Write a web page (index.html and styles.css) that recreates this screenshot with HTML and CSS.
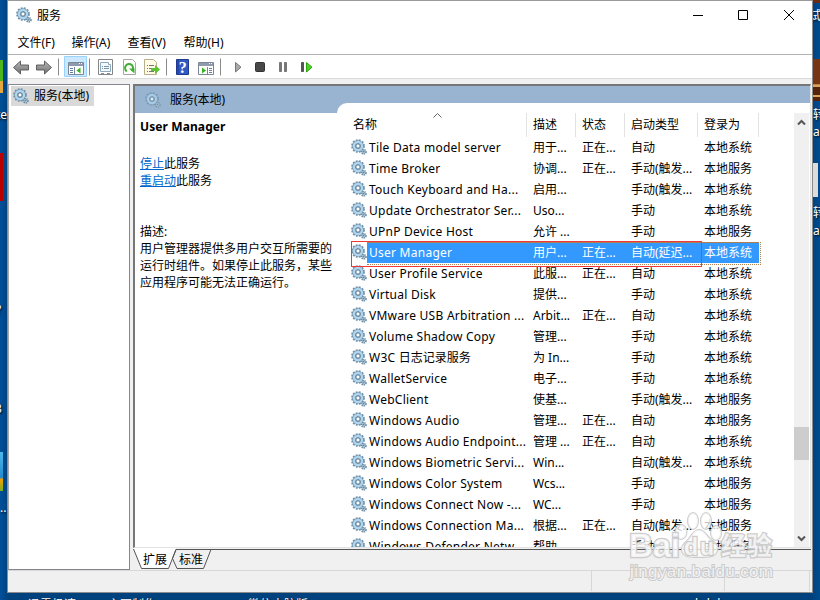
FILE: index.html
```
<!DOCTYPE html>
<html lang="zh-CN">
<head>
<meta charset="utf-8">
<title>服务</title>
<link rel="stylesheet" href="styles.css">
</head>
<body>
<svg class="defs" width="0" height="0">
  <defs>
    <symbol id="gear" viewBox="0 0 16 16">
      <circle cx="7" cy="7" r="5.9" fill="none" stroke="#6d8fa8" stroke-width="1.9" stroke-dasharray="1.9 1.2"/>
      <circle cx="7" cy="7" r="4" fill="none" stroke="#7499b5" stroke-width="3.6"/>
      <circle cx="7" cy="7" r="4" fill="none" stroke="#b0d5ec" stroke-width="2.3"/>
      <circle cx="7" cy="7" r="2.1" fill="#fff" stroke="#4d6d87" stroke-width=".9"/>
      <circle cx="12.800" cy="12.800" r="2.100" fill="#c4dcea" stroke="#6c8ca3" stroke-width="1.800" stroke-dasharray="1.2 .7"/>
      <circle cx="12.800" cy="12.800" r=".8" fill="#4f7490"/>
    </symbol>
    <linearGradient id="gray" x2="0" y2="1"><stop stop-color="#b8b8b8"/><stop offset="1" stop-color="#707070"/></linearGradient>
  </defs>
</svg>
<div class="desk">
  <span class="dk d1">te</span><span class="dk d2">?</span><span class="dk d3">3</span><span class="dk d4">...</span>
  <i class="blob b1"></i><i class="blob b2"></i><i class="blob b3"></i>
  <span class="dk d5">试.</span><span class="dk d6">转</span><span class="dk d7">a</span><span class="dk d8">转</span><span class="dk d9">a</span>
  <i class="blob b4"></i><i class="blob b5"></i><i class="blob b6"></i>
  <span class="dk d10">迅雷极速</span><span class="dk d11">主图制作</span><span class="dk d12">微信电脑版</span><span class="dk d13">bd d</span>
</div>
<div class="window">
  <header class="title">
    <svg class="ico"><use href="#gear"/></svg><span>服务</span>
    <svg class="ctl" width="110" height="20" fill="none" stroke="#000"><path d="M1 10.500h10M46.500 5.500h9v9h-9zM92 5l10 10M102 5L92 15"/></svg>
  </header>
  <nav class="menu"><span>文件(F)</span><span>操作(A)</span><span>查看(V)</span><span>帮助(H)</span></nav>
  <div class="tools">
    <svg width="320" height="23" viewBox="8 55 320 23">
      <g fill="url(#gray)" stroke="#555" stroke-width=".9">
        <path d="M13.500 67.500l7-6.500v4h8v5h-8v4z"/><path d="M51.500 67.500l-7-6.500v4h-8v5h8v4z"/>
      </g>
      <path d="M58.500 58.500v17M89.500 58.500v17M166.500 58.500v17M220.500 58.500v17" stroke="#8a8a8a"/>
      <path d="M64.500 56.500h22v20h-22z" fill="#cce8ff" stroke="#99d1ff"/>
      <path d="M68.500 62.500h15v12h-15z" fill="#fff" stroke="#7c8796"/><path d="M69 64.500h14" stroke="#8f9bac" stroke-width="3"/><path d="M79 63.500h1M81 63.500h1" stroke="#fff"/>
      <path d="M74.500 67v7" stroke="#7c8796"/><path d="M70 68.500h3M70 70.500h3M70 72.500h3" stroke="#5f7fa6"/><path d="M80.500 67.500v6l-4-3z" fill="#35b51d"/>
      <path d="M98.500 59.500h14v15h-14z" fill="#fff" stroke="#858585"/><path d="M100.500 62.500h8v2h2v7h-10z" fill="#f3f8fc" stroke="#8fa9bc"/><path d="M102 66.500h1M104 66.500h5M102 68.500h1M104 68.500h5M101 73.500h3M107 73.500h3" stroke="#7a95a8"/>
      <path d="M123.500 59.500h9l3 3v12h-12z" fill="#fffefa" stroke="#a6a6a6"/><path d="M126.800 71.300a4 4 0 1 1 5-.4" fill="none" stroke="#3fae35" stroke-width="2"/><path d="M129 68.500h5.500v5z" fill="#3fae35"/>
      <path d="M144.500 59.500h9l3 3v12h-12z" fill="#fffbe5" stroke="#b7ae8b"/><path d="M147 65.500h1M149 65.500h5M147 68.500h1M149 68.500h3M147 71.500h1M149 71.500h5" stroke="#777"/><path d="M151 68h4v-3l5 4.500-5 4.500v-3h-4z" fill="#5bc52f"/>
      <path d="M176.500 59.500h12v15h-12z" fill="#3059c4" stroke="#203a91"/><path d="M178 60v14" stroke="#1d388b"/>
      <text x="178.800" y="73" fill="#fff" font-family="Liberation Serif" font-weight="bold" font-size="16">?</text>
      <path d="M198.500 62.500h15v12h-15z" fill="#fff" stroke="#7c8796"/><path d="M199 64.500h14" stroke="#8f9bac" stroke-width="3"/><path d="M209 63.500h1M211 63.500h1" stroke="#fff"/><path d="M207.500 67v7" stroke="#7c8796"/><path d="M209 68.500h3M209 70.500h3M209 72.500h3" stroke="#5f7fa6"/><path d="M202 67.500v6l4-3z" fill="#35b51d"/>
      <path d="M235.500 62.500v9.500l5.500-4.800z" fill="#aaa" stroke="#777"/>
      <rect x="255.500" y="62.500" width="9" height="9" rx="1" fill="#484848" stroke="#333"/>
      <path d="M279.500 62.500h2v9h-2zM284.500 62.500h2v9h-2z" fill="#777" stroke="#777"/>
      <path d="M301.500 62.500h2v9h-2z" fill="#555" stroke="#555"/><path d="M306.500 62.500v9.500l5.500-4.800z" fill="#4ed323" stroke="#2ba60f"/>
    </svg>
  </div>
  <main class="body">
    <aside class="tree"><div class="node"><svg class="ico"><use href="#gear"/></svg><span>服务(本地)</span></div></aside>
    <section class="right">
      <div class="panel">
        <div class="banner"><svg class="ico"><use href="#gear"/></svg><span>服务(本地)</span></div>
        <div class="content">
          <div class="detail">
            <h1>User Manager</h1>
            <p class="links"><a>停止</a>此服务<br><a>重启动</a>此服务</p>
            <p class="desc">描述:<br>用户管理器提供多用户交互所需要的<br>运行时组件。如果停止此服务，某些<br>应用程序可能无法正确运行。</p>
          </div>
          <div class="list">
            <div class="head"><span>名称</span><span>描述</span><span>状态</span><span>启动类型</span><span>登录为</span>
              <svg class="sort" width="9" height="5" fill="none" stroke="#666"><path d="M.5 4.500l4-4 4 4"/></svg></div>
            <div class="rows">
              <div class="row"><svg class="ico"><use href="#gear"/></svg><b>Tile Data model server</b><span>用于...</span><span>正在...</span><span>自动</span><span>本地系统</span></div>
              <div class="row"><svg class="ico"><use href="#gear"/></svg><b>Time Broker</b><span>协调...</span><span>正在...</span><span>手动(触发...</span><span>本地服务</span></div>
              <div class="row"><svg class="ico"><use href="#gear"/></svg><b>Touch Keyboard and Ha...</b><span>启用...</span><span></span><span>手动(触发...</span><span>本地系统</span></div>
              <div class="row"><svg class="ico"><use href="#gear"/></svg><b>Update Orchestrator Ser...</b><span>Uso...</span><span></span><span>手动</span><span>本地系统</span></div>
              <div class="row"><svg class="ico"><use href="#gear"/></svg><b>UPnP Device Host</b><span>允许 ...</span><span></span><span>手动</span><span>本地服务</span></div>
              <div class="row sel"><svg class="ico"><use href="#gear"/></svg><b>User Manager</b><span>用户...</span><span>正在...</span><span>自动(延迟...</span><span>本地系统</span></div>
              <div class="row"><svg class="ico"><use href="#gear"/></svg><b>User Profile Service</b><span>此服...</span><span>正在...</span><span>自动</span><span>本地系统</span></div>
              <div class="row"><svg class="ico"><use href="#gear"/></svg><b>Virtual Disk</b><span>提供...</span><span></span><span>手动</span><span>本地系统</span></div>
              <div class="row"><svg class="ico"><use href="#gear"/></svg><b>VMware USB Arbitration ...</b><span>Arbit...</span><span>正在...</span><span>自动</span><span>本地系统</span></div>
              <div class="row"><svg class="ico"><use href="#gear"/></svg><b>Volume Shadow Copy</b><span>管理...</span><span></span><span>手动</span><span>本地系统</span></div>
              <div class="row"><svg class="ico"><use href="#gear"/></svg><b>W3C <i>日志记录服务</i></b><span>为 In...</span><span></span><span>手动</span><span>本地系统</span></div>
              <div class="row"><svg class="ico"><use href="#gear"/></svg><b>WalletService</b><span>电子...</span><span></span><span>手动</span><span>本地系统</span></div>
              <div class="row"><svg class="ico"><use href="#gear"/></svg><b>WebClient</b><span>使基...</span><span></span><span>手动(触发...</span><span>本地服务</span></div>
              <div class="row"><svg class="ico"><use href="#gear"/></svg><b>Windows Audio</b><span>管理...</span><span>正在...</span><span>自动</span><span>本地服务</span></div>
              <div class="row"><svg class="ico"><use href="#gear"/></svg><b>Windows Audio Endpoint...</b><span>管理 ...</span><span>正在...</span><span>自动</span><span>本地系统</span></div>
              <div class="row"><svg class="ico"><use href="#gear"/></svg><b>Windows Biometric Servi...</b><span>Win...</span><span></span><span>自动(触发...</span><span>本地系统</span></div>
              <div class="row"><svg class="ico"><use href="#gear"/></svg><b>Windows Color System</b><span>Wcs...</span><span></span><span>手动</span><span>本地服务</span></div>
              <div class="row"><svg class="ico"><use href="#gear"/></svg><b>Windows Connect Now -...</b><span>WC...</span><span></span><span>手动</span><span>本地服务</span></div>
              <div class="row"><svg class="ico"><use href="#gear"/></svg><b>Windows Connection Ma...</b><span>根据...</span><span>正在...</span><span>自动(触发...</span><span>本地服务</span></div>
              <div class="row"><svg class="ico"><use href="#gear"/></svg><b>Windows Defender Netw...</b><span>帮助...</span><span></span><span>手动</span><span>本地服务</span></div>
            </div>
            <div class="mark"></div>
          </div>
          <div class="scroll">
            <svg width="15" height="18" fill="none" stroke="#555" stroke-width="2"><path d="M4 11.500L7.500 8l3.500 3.500"/></svg>
            <div class="thumb"></div>
            <svg width="15" height="18" fill="none" stroke="#555" stroke-width="2"><path d="M4 7.500L7.500 11 11 7.500"/></svg>
          </div>
        </div>
      </div>
      <div class="tabs">
        <svg class="shape" width="678" height="22" fill="none" stroke="#555">
          <path d="M.5 0L8.500 20.500H35.500L43 0z" fill="#fff" stroke="none"/>
          <path d="M39.500 10.500L43 1.500H78L70.500 20.500H44z" fill="#f0f0f0"/>
          <path d="M.5 1L8.500 20.500H35.500L43 1.500H678"/>
        </svg>
        <span>扩展</span><span>标准</span>
      </div>
    </section>
  </main>
  <footer class="status"><div></div><div></div><div></div></footer>
</div>
<svg class="water" width="160" height="80" viewBox="620 508 160 80">
  <g fill="#fff" fill-opacity=".75" stroke="#c4c4c4" stroke-opacity=".85" stroke-width="2" paint-order="stroke">
    <ellipse cx="681" cy="532" rx="5.500" ry="7"/><ellipse cx="693" cy="521" rx="5" ry="8"/><ellipse cx="706" cy="521" rx="5" ry="8"/><ellipse cx="716" cy="533" rx="5" ry="7"/>
    <path d="M699 530c5 0 7 5 11 9 5 4 9 7 7 12-2 6-9 6-18 6s-15 0-17-6c-1-5 3-8 7-12 3-4 5-9 10-9z"/>
    <g font-family="Liberation Sans" font-weight="bold" stroke-width="2.500">
      <text x="629" y="557" font-size="33" textLength="51">Bai</text>
      <text x="684" y="555" font-size="23" textLength="30">du</text>
      <text x="721" y="555" font-size="25" font-family="Noto Sans CJK SC" textLength="51">经验</text>
    </g>
    <text x="630" y="577" font-size="17" font-family="Liberation Sans" textLength="143">jingyan.baidu.com</text>
  </g>
</svg>
</body>
</html>
```
FILE: styles.css
```
* { box-sizing: border-box; }
body { margin: 0; width: 820px; height: 600px; overflow: hidden; position: relative; background: #00478a; font: 12px/16px "Noto Sans", "Noto Sans CJK SC", sans-serif; color: #000; }
.defs { position: absolute; }
.ico { width: 16px; height: 16px; flex: none; display: block; }
.desk { position: absolute; inset: 0; background: linear-gradient(90deg, #00509a, #00427e 8px, #00427e 812px, #004b90 820px); }
.dk { position: absolute; color: #fff; white-space: nowrap; text-shadow: 1px 1px 2px #000; }
.d1 { left: -4px; top: 107px; } .d2 { left: -4px; top: 302px; } .d3 { left: -5px; top: 401px; } .d4 { left: 0; top: 500px; }
.d5 { left: 809px; top: 8px; } .d6 { left: 813px; top: 107px; } .d7 { left: 813px; top: 124px; } .d8 { left: 813px; top: 205px; } .d9 { left: 813px; top: 223px; }
.d10 { left: 28px; top: 597px; } .d11 { left: 108px; top: 597px; } .d12 { left: 248px; top: 597px; } .d13 { left: 695px; top: 596px; }
.blob { position: absolute; }
.b1 { left: 0; top: 60px; width: 3px; height: 33px; background: linear-gradient(#4fb51d 65%, #e6a640 65%); }
.b2 { left: 0; top: 153px; width: 3px; height: 48px; background: #b80000; }
.b3 { left: 0; top: 452px; width: 3px; height: 39px; background: linear-gradient(#4cb9ec, #238ad0 65%, #f4a000 70%, #79ae22); }
.b4 { left: 813px; top: 59px; width: 7px; height: 42px; background: linear-gradient(#773511 60%, #d9a35b 61% 66%, #55220c 67% 85%, #d9a35b 86% 90%, #55220c 91%); }
.b5 { left: 813px; top: 163px; width: 5px; height: 34px; background: #ddd; }
.b6 { left: 813px; top: 0; width: 7px; height: 3px; background: #6b2d12; }
.window { position: relative; width: 806px; height: 593px; margin-left: 7px; display: flex; flex-direction: column; background: #f0f0f0; border: 1px solid #8c8c8c; border-top-color: #999; }
.title { height: 31px; display: flex; align-items: center; background: #fff; padding: 0 15px 2px 8px; gap: 5px; }
.title .ico { margin-top: -1px; }
.ctl { margin-left: auto; margin-right: -5px; margin-top: -1px; }
.menu { height: 22px; display: flex; background: #fff; padding: 3px 9.5px 0; }
.menu span { width: 54px; }
.menu span:nth-child(2), .menu span:nth-child(3) { width: 56px; }
.tools { height: 25px; background: #fff; border-top: 1px solid #b2b2b2; border-bottom: 1px solid #dadada; }
.tools svg { display: block; }
.body { height: 491px; padding-top: 5px; display: flex; gap: 3px; }
.tree { width: 122px; height: 486px; background: #fff; border: 1px solid #848690; border-left-color: #aaa; padding: 1px 2px; }
.node { width: 83px; height: 20px; background: #d9d9d9; display: flex; align-items: center; gap: 5px; padding-left: 2px; white-space: nowrap; }
.right { flex: 1; }
.panel { width: 678px; height: 464px; background: #fff; border-left: 2px solid #777; border-top: 2px solid #777; border-right: 1px solid #e3e3e3; border-bottom: 1px solid #e3e3e3; }
.banner { height: 27px; background: #99b4d1; display: flex; align-items: center; gap: 9px; padding-left: 10px; }
.banner .ico { opacity: .7; }
.content { display: flex; height: 434px; }
.detail { width: 215px; padding: 5px 0 0 5px; line-height: 17px; white-space: nowrap; }
.detail h1 { font-size: 12px; line-height: 17px; margin: 0; letter-spacing: .1px; }
.detail p { margin: 0; }
.links { padding-top: 20px; }
.detail .desc { padding-top: 34px; }
.detail a { color: #0066cc; text-decoration: underline; }
.list { width: 443px; position: relative; }
.list::before { content: ""; position: absolute; left: -13px; top: -10px; width: 473px; height: 10px; background: #fff; border-top-left-radius: 11px; }
.head { height: 24px; display: grid; grid-template-columns: 177px 49px 49px 73px 61px; position: relative; }
.head span { border-right: 1px solid #e2e2e2; padding: 4px 0 0 6px; }
.head span:first-child { padding-left: 3px; }
.sort { position: absolute; left: 83px; top: 0; }
.rows { height: 410px; overflow: hidden; }
.row { height: 21px; display: grid; grid-template-columns: 18px 165px 49px 49px 73px 54px; align-items: center; white-space: nowrap; position: relative; }
.row .ico { margin-left: 1px; margin-top: -1px; }
.row b { font-weight: normal; letter-spacing: .25px; padding-left: 1px; }
.row i { font-style: normal; letter-spacing: 0; }
.sel { color: #fff; background: linear-gradient(#3399ff, #3399ff) 17px 0 / 392px 21px no-repeat; }
.sel::after { content: ""; position: absolute; left: 17px; top: 0; width: 392px; height: 21px; border: 1px dotted #b08050; }
.mark { position: absolute; left: 1px; top: 128px; width: 351px; height: 26px; border: 1px solid #f03838; }
.scroll { width: 15px; background: #f0f0f0; display: flex; flex-direction: column; margin-left: 1px; }
.thumb { height: 33px; margin: 296px 0 auto; background: #cdcdcd; }
.tabs { position: relative; height: 22px; display: flex; padding: 4px 0 0 10px; gap: 12px; }
.tabs span { position: relative; }
.shape { position: absolute; left: 0; top: 0; }
.status { height: 22px; border-top: 1px solid #d7d7d7; display: grid; grid-template-columns: 584px 133px 85px; }
.status div { border-right: 1px solid #d7d7d7; height: 20px; }
.water { position: absolute; left: 620px; top: 508px; }
```
